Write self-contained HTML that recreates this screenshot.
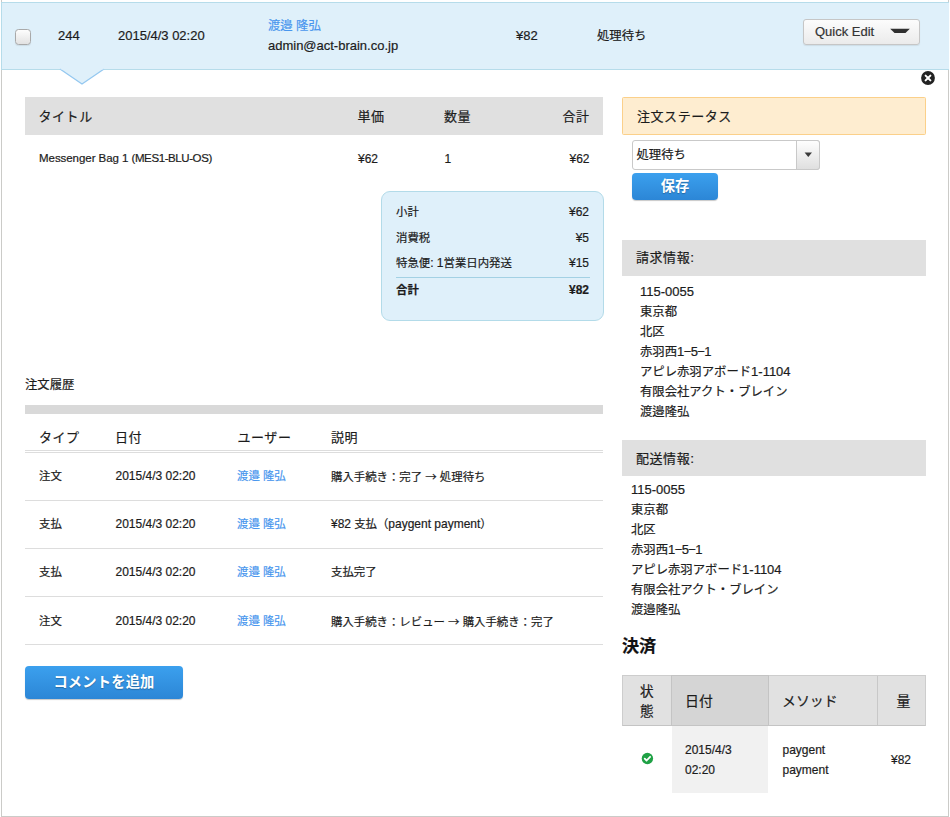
<!DOCTYPE html>
<html lang="ja">
<head>
<meta charset="utf-8">
<title>Orders</title>
<style>
html,body{margin:0;padding:0;background:#fff;}
body{width:950px;height:817px;position:relative;overflow:hidden;font-family:"Liberation Sans","Noto Sans CJK JP",sans-serif;color:#1c1c1c;font-size:12px;-webkit-text-stroke:0.2px currentColor;}
.abs{position:absolute;white-space:nowrap;}
#frame{position:absolute;left:1px;top:0;width:946px;height:816px;border:1px solid #cbcbc8;border-top:none;}
#hdr{position:absolute;left:1px;top:2px;width:947px;height:66px;background:#dff0fa;border:1px solid #b6dcea;border-right:none;}
/* sizes: target was 0.95-scaled; CJK at .95x, Latin spans bumped to match Open Sans widths */
.t13{font-size:12.35px;line-height:16px;}
.t12{font-size:11.4px;line-height:16px;}
.t15{font-size:14.25px;line-height:18px;}
.t14{font-size:13px;line-height:18px;letter-spacing:.55px;}
.L{font-size:1.0526em;}
.ar{font-family:"Noto Sans CJK JP",sans-serif;}
.lnk{color:#4896ee;}
.bar{position:absolute;background:#e0e0e0;}
.hl{position:absolute;height:1px;background:#dddddd;left:25px;width:578px;}
.btn{position:absolute;border-radius:4px;background:linear-gradient(#3ba0ee,#2c86d6);color:#fff;font-weight:bold;text-align:center;box-shadow:0 1px 1px rgba(0,0,0,.22);text-shadow:0 1px 1px rgba(0,0,0,.25);-webkit-text-stroke:0;}
.r{text-align:right;}
</style>
</head>
<body>
<div id="frame"></div>
<div id="hdr"></div>
<svg class="abs" style="left:58px;top:68px" width="50" height="18" viewBox="0 0 50 18"><path d="M2 1 L24 16 L46 1" fill="#dff0fa" stroke="#94c8f0" stroke-width="1.2"/><rect x="2.6" y="0" width="43" height="1.5" fill="#dff0fa"/></svg>

<!-- header row -->
<div class="abs" style="left:14.5px;top:29px;width:14px;height:14px;border:1px solid #a9a9a9;border-radius:3.5px;background:linear-gradient(#fdfdfd,#e2e2e2);box-shadow:0 1px 1px rgba(0,0,0,.08)"></div>
<div class="abs t13" style="left:58px;top:28px"><span class="L">244</span></div>
<div class="abs t13" style="left:118px;top:28px"><span class="L">2015/4/3 02:20</span></div>
<div class="abs t13 lnk" style="left:268px;top:18px">渡邉 隆弘</div>
<div class="abs t13" style="left:268px;top:38px"><span class="L">admin@act-brain.co.jp</span></div>
<div class="abs t13" style="left:516px;top:28px"><span class="L">¥82</span></div>
<div class="abs t13" style="left:597px;top:28px">処理待ち</div>
<div class="abs" style="left:802.6px;top:19px;width:115px;height:23.5px;border:1px solid #c6c6c6;border-radius:3px;background:linear-gradient(#fcfcfc,#ebebeb);box-shadow:0 1px 1px rgba(0,0,0,.08);"></div>
<div class="abs t13" style="left:815px;top:24px;color:#333"><span class="L">Quick Edit</span></div>
<svg class="abs" style="left:889px;top:28px" width="22" height="6" viewBox="0 0 22 6"><path d="M1.2 0.7 H20.8 L16.5 4.9 H5.5 Z" fill="#303030"/></svg>

<svg class="abs" style="left:920px;top:71px" width="15" height="15" viewBox="0 0 15 15"><circle cx="8" cy="7" r="6.9" fill="#222"/><path d="M5.6 4.6 L10.4 9.4 M10.4 4.6 L5.6 9.4" stroke="#fff" stroke-width="2" stroke-linecap="round"/></svg>

<!-- items table -->
<div class="bar" style="left:24.5px;top:97.3px;width:578.5px;height:37.4px"></div>
<div class="abs t14" style="left:38.5px;top:108px">タイトル</div>
<div class="abs t14" style="left:357.5px;top:108px">単価</div>
<div class="abs t14" style="left:444px;top:108px">数量</div>
<div class="abs t14" style="left:562.5px;top:108px">合計</div>
<div class="abs t12" style="left:39px;top:150px;font-size:11.5px;letter-spacing:-0.05px">Messenger Bag 1 <span style="letter-spacing:-0.41px">(MES1-BLU-OS)</span></div>
<div class="abs t12" style="left:358px;top:151px"><span class="L">¥62</span></div>
<div class="abs t12" style="left:444.5px;top:151px"><span class="L">1</span></div>
<div class="abs t12 r" style="right:360.5px;top:151px"><span class="L">¥62</span></div>

<!-- totals -->
<div class="abs" style="left:381px;top:191px;width:221px;height:128px;border:1px solid #b3dbe9;border-radius:9px;background:#dff0fa;"></div>
<div class="abs t12" style="left:396px;top:204px">小計</div>
<div class="abs t12 r" style="right:361px;top:204px"><span class="L">¥62</span></div>
<div class="abs t12" style="left:396px;top:230px">消費税</div>
<div class="abs t12 r" style="right:361px;top:230px"><span class="L">¥5</span></div>
<div class="abs t12" style="left:396px;top:255px">特急便<span class="L">: 1</span>営業日内発送</div>
<div class="abs t12 r" style="right:361px;top:255px"><span class="L">¥15</span></div>
<div class="abs" style="left:396px;top:276.5px;width:193.5px;height:1.4px;background:#a3d1e4"></div>
<div class="abs t12" style="left:396px;top:282px;font-weight:bold">合計</div>
<div class="abs t12 r" style="right:361px;top:282px;font-weight:bold"><span class="L">¥82</span></div>

<!-- history -->
<div class="abs t13" style="left:25px;top:377px">注文履歴</div>
<div class="bar" style="left:24.5px;top:405px;width:578.5px;height:9px;background:#d9d9d9"></div>
<div class="abs t14" style="left:39px;top:429px">タイプ</div>
<div class="abs t14" style="left:115px;top:429px">日付</div>
<div class="abs t14" style="left:237.5px;top:429px">ユーザー</div>
<div class="abs t14" style="left:331px;top:429px">説明</div>
<div class="hl" style="top:450px;"></div>
<div class="hl" style="top:452px;"></div>

<div class="abs t12" style="left:39px;top:468px">注文</div>
<div class="abs t12" style="left:115.5px;top:468px"><span class="L">2015/4/3 02:20</span></div>
<div class="abs t12 lnk" style="left:237px;top:468px">渡邉 隆弘</div>
<div class="abs t12" style="left:331px;top:468px">購入手続き：完了 <span class="ar">→</span> 処理待ち</div>
<div class="hl" style="top:500px"></div>

<div class="abs t12" style="left:39px;top:516px">支払</div>
<div class="abs t12" style="left:115.5px;top:516px"><span class="L">2015/4/3 02:20</span></div>
<div class="abs t12 lnk" style="left:237px;top:516px">渡邉 隆弘</div>
<div class="abs t12" style="left:331px;top:516px"><span class="L">¥82</span> 支払（<span class="L">paygent payment</span>）</div>
<div class="hl" style="top:548px"></div>

<div class="abs t12" style="left:39px;top:564px">支払</div>
<div class="abs t12" style="left:115.5px;top:564px"><span class="L">2015/4/3 02:20</span></div>
<div class="abs t12 lnk" style="left:237px;top:564px">渡邉 隆弘</div>
<div class="abs t12" style="left:331px;top:564px">支払完了</div>
<div class="hl" style="top:596px"></div>

<div class="abs t12" style="left:39px;top:613px">注文</div>
<div class="abs t12" style="left:115.5px;top:613px"><span class="L">2015/4/3 02:20</span></div>
<div class="abs t12 lnk" style="left:237px;top:613px">渡邉 隆弘</div>
<div class="abs t12" style="left:331px;top:613px">購入手続き：レビュー <span class="ar">→</span> 購入手続き：完了</div>
<div class="hl" style="top:644.3px"></div>

<div class="btn t15" style="left:25px;top:666px;width:158px;height:33px;line-height:32px;letter-spacing:.2px">コメントを追加</div>

<!-- right column -->
<div class="abs" style="left:622px;top:97px;width:301.5px;height:36px;background:#feedd0;border:1px solid #fbd08a;border-radius:1.5px;"></div>
<div class="abs t14" style="left:637px;top:108px">注文ステータス</div>
<div class="abs" style="left:631.5px;top:140px;width:188px;height:29.5px;border:1px solid #c9c9c9;border-radius:3px;background:#fff;box-sizing:border-box"></div>
<div class="abs" style="left:796px;top:140px;width:23.5px;height:29.5px;border:1px solid #c9c9c9;border-radius:0 3px 3px 0;background:linear-gradient(#fefefe,#dfdfdf);box-sizing:border-box"></div>
<svg class="abs" style="left:804px;top:152px" width="9" height="6" viewBox="0 0 9 6"><path d="M0.6 0.4 H8 L4.3 5 Z" fill="#3a3a3a"/></svg>
<div class="abs t13" style="left:636.5px;top:147px">処理待ち</div>
<div class="btn t15" style="left:632px;top:172.5px;width:86px;height:27.5px;line-height:27px;">保存</div>

<div class="bar" style="left:622px;top:240px;width:304px;height:36px"></div>
<div class="abs t14" style="left:636px;top:249px">請求情報<span class="L">:</span></div>
<div class="abs t13" style="left:640px;top:282px;line-height:20px"><span class="L">115-0055</span><br>東京都<br>北区<br>赤羽西<span class="L" style="letter-spacing:-0.6px">1−5−1</span><br>アピレ赤羽アボード<span class="L">1-1104</span><br>有限会社アクト・ブレイン<br>渡邉隆弘</div>

<div class="bar" style="left:622px;top:440.3px;width:304px;height:36px"></div>
<div class="abs t14" style="left:636px;top:449.5px">配送情報<span class="L">:</span></div>
<div class="abs t13" style="left:631px;top:479.6px;line-height:20.05px"><span class="L">115-0055</span><br>東京都<br>北区<br>赤羽西<span class="L" style="letter-spacing:-0.6px">1−5−1</span><br>アピレ赤羽アボード<span class="L">1-1104</span><br>有限会社アクト・ブレイン<br>渡邉隆弘</div>

<div class="abs" style="left:622px;top:635px;font-size:17.1px;line-height:24px;font-weight:bold;color:#111">決済</div>

<!-- payments table -->
<div class="abs" style="left:622px;top:675px;width:304px;height:51px;background:#e1e1e1;border:1px solid #cdcdcd;border-bottom-color:#c4c4c4;box-sizing:border-box;"></div>
<div class="abs" style="left:671px;top:675px;width:97.8px;height:51px;background:#d5d5d5;border:1px solid #c4c4c4;box-sizing:border-box"></div>
<div class="abs" style="left:877px;top:676px;width:1px;height:49px;background:#c8c8c8"></div>
<div class="abs" style="left:671.6px;top:726px;width:96.8px;height:67px;background:#f1f1f1"></div>
<div class="abs t15" style="left:640px;top:682px;line-height:19.5px;text-align:center;font-size:13.6px">状<br>態</div>
<div class="abs t15" style="left:685px;top:692px;font-size:13.9px">日付</div>
<div class="abs t15" style="left:782px;top:692px;font-size:13.9px">メソッド</div>
<div class="abs t15" style="left:896.5px;top:692px;font-size:13.9px">量</div>
<svg class="abs" style="left:640.5px;top:752px" width="13" height="13" viewBox="0 0 13 13"><circle cx="6.4" cy="6.5" r="5.7" fill="#1fa145"/><path d="M3.7 6.6 L5.6 8.5 L9.1 4.8" stroke="#fff" stroke-width="1.8" fill="none" stroke-linecap="round" stroke-linejoin="round"/></svg>
<div class="abs t12" style="left:685px;top:739.5px;line-height:20px"><span class="L">2015/4/3<br>02:20</span></div>
<div class="abs t12" style="left:782.5px;top:739.5px;line-height:20px"><span class="L">paygent<br>payment</span></div>
<div class="abs t12" style="left:891px;top:752px"><span class="L">¥82</span></div>
</body>
</html>
